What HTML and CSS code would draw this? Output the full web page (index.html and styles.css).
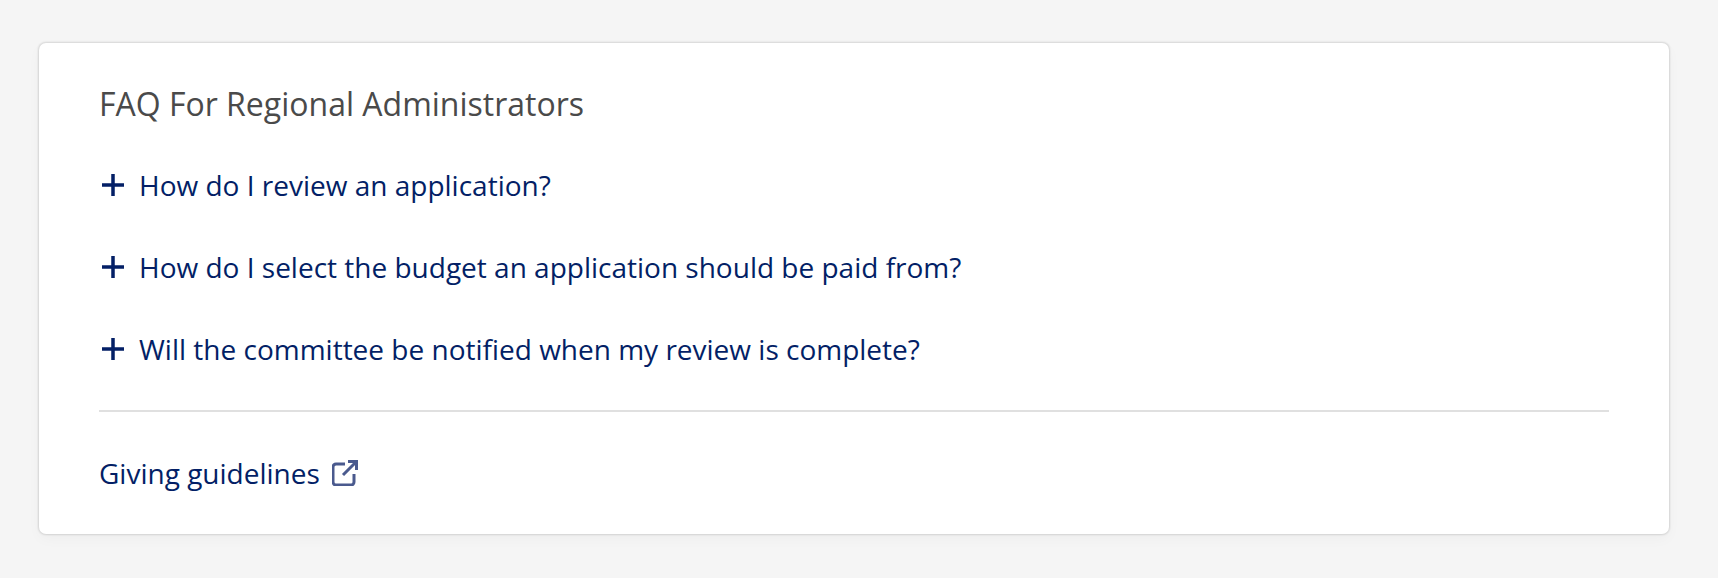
FILE: index.html
```html
<!DOCTYPE html>
<html lang="en">
<head>
    <meta charset="UTF-8">
    <title>FAQ For Regional Administrators</title>
    <link rel="stylesheet" href="styles.css">
</head>
<body>
    <div class="card">
        <h2 class="title">FAQ For Regional Administrators</h2>
        <ul class="faq">
            <li class="faq-item">
                <svg class="plus" viewBox="0 0 22 22"><path d="M11 0v22M0 11h22"/></svg>
                <span>How do I review an application?</span>
            </li>
            <li class="faq-item">
                <svg class="plus" viewBox="0 0 22 22"><path d="M11 0v22M0 11h22"/></svg>
                <span>How do I select the budget an application should be paid from?</span>
            </li>
            <li class="faq-item">
                <svg class="plus" viewBox="0 0 22 22"><path d="M11 0v22M0 11h22"/></svg>
                <span>Will the committee be notified when my review is complete?</span>
            </li>
        </ul>
        <div class="foot">
            <a class="guide" href="#">Giving guidelines
                <svg class="ext" viewBox="0 0 26 26"><path d="M13 4H4a3 3 0 0 0-3 3v15a3 3 0 0 0 3 3h15a3 3 0 0 0 3-3v-8M11 15L24.500 1.500M16 1.500h8.500V10"/></svg>
            </a>
        </div>
    </div>
</body>
</html>
```

FILE: styles.css
```css
body {
    margin: 0;
    padding: 43px 49px 43px 39px;
    background: #f5f5f5;
    font-family: "Open Sans", "Liberation Sans", sans-serif;
}
.card {
    height: 491px;
    box-sizing: border-box;
    padding: 41px 60px 0 60px;
    background: #ffffff;
    border-radius: 7px;
    box-shadow: 0 0 2px 1px rgba(0, 0, 0, 0.13), 0 5px 14px rgba(0, 0, 0, 0.03);
}
.title {
    margin: 0;
    font-size: 32px;
    line-height: 40px;
    font-weight: 400;
    color: #4a4a4a;
}
.faq {
    list-style: none;
    margin: 20px 0 0;
    padding: 0 0 20px;
    border-bottom: 2px solid #e0e0e0;
}
.faq-item {
    display: flex;
    align-items: center;
    gap: 15px;
    height: 82px;
    font-size: 28px;
    color: #031f66;
}
.plus {
    width: 22px;
    height: 22px;
    margin-left: 3px;
    fill: none;
    stroke: #031f66;
    stroke-width: 3.5;
}
.foot {
    margin-top: 42px;
}
.guide {
    display: inline-flex;
    align-items: center;
    gap: 12px;
    font-size: 28px;
    color: #031f66;
    text-decoration: none;
}
.ext {
    width: 26px;
    height: 26px;
    fill: none;
    stroke: #4a5a8e;
    stroke-width: 3;
}
```
